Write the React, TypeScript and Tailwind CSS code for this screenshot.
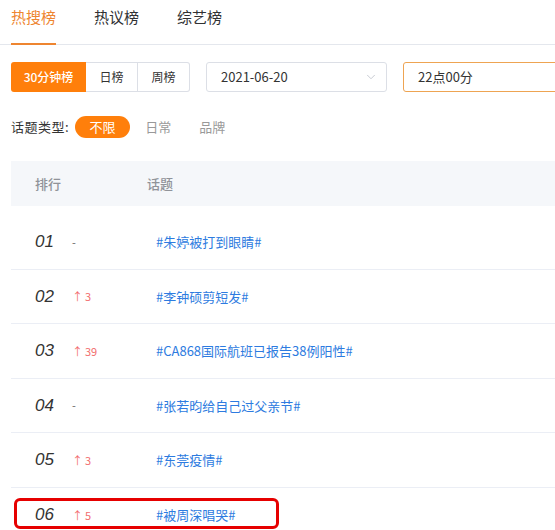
import { ChevronDown } from "lucide-react";

const rows = [
  { rank: "01", change: "", topic: "#朱婷被打到眼睛#" },
  { rank: "02", change: "3", topic: "#李钟硕剪短发#" },
  { rank: "03", change: "39", topic: "#CA868国际航班已报告38例阳性#" },
  { rank: "04", change: "", topic: "#张若昀给自己过父亲节#" },
  { rank: "05", change: "3", topic: "#东莞疫情#" },
  { rank: "06", change: "5", topic: "#被周深唱哭#" },
];

export default function App() {
  return (
    <div
      className="w-[555px] h-[530px] overflow-hidden bg-white text-[#333]"
      style={{ fontFamily: '"Noto Sans CJK SC", "Noto Sans", sans-serif' }}
    >
      {/* Tabs */}
      <div className="relative h-[45px] border-b border-[#e4e7ed] flex pl-[11px] gap-[38px]">
        <div className="relative pt-[6px] text-[15px] text-[#ee8530]">
          热搜榜
          <div className="absolute left-0 right-0 bottom-[-1px] h-[2px] bg-[#ee8530]" />
        </div>
        <div className="pt-[6px] text-[15px] text-[#303133]">热议榜</div>
        <div className="pt-[6px] text-[15px] text-[#303133]">综艺榜</div>
      </div>

      {/* Filters */}
      <div className="flex items-center mt-[17px] pl-[11px] h-[30px]">
        <div className="flex h-[30px] text-[12px] shrink-0">
          <div className="w-[75px] flex items-center justify-center bg-[#ff7f0b] text-white rounded-l-[3px] font-medium">
            30分钟榜
          </div>
          <div className="w-[52px] flex items-center justify-center border border-l-0 border-[#dcdfe6] text-[#333]">
            日榜
          </div>
          <div className="w-[52px] flex items-center justify-center border border-l-0 border-[#dcdfe6] text-[#333] rounded-r-[3px]">
            周榜
          </div>
        </div>
        <div className="ml-[16px] w-[181px] shrink-0 h-[30px] border border-[#dcdfe6] rounded-[3px] flex items-center justify-between pl-[14px] pr-[8px] text-[13px] text-[#333]">
          <span>2021-06-20</span>
          <ChevronDown size={14} strokeWidth={1.5} className="text-[#c0c4cc]" />
        </div>
        <div className="ml-[16px] w-[170px] shrink-0 h-[30px] border border-[#eea452] rounded-[3px] flex items-center pl-[14px] text-[13px] text-[#333]">
          22点00分
        </div>
      </div>

      {/* Topic type */}
      <div className="flex items-center mt-[23px] pl-[11px] h-[23px] text-[13px]">
        <span className="text-[#333] tracking-[0.5px]">话题类型:</span>
        <span className="ml-[6px] w-[55px] h-[22px] rounded-full bg-[#ff7f0b] text-white flex items-center justify-center">
          不限
        </span>
        <span className="ml-[15px] text-[#999]">日常</span>
        <span className="ml-[28px] text-[#999]">品牌</span>
      </div>

      {/* Table */}
      <div className="ml-[11px] mt-[23px]">
        <div className="h-[45px] bg-[#f5f7fa] flex items-center text-[13px] font-medium text-[#909399]">
          <span className="w-[136px] pl-[24px]">排行</span>
          <span>话题</span>
        </div>
        <div className="h-[9px]" />
        {rows.map((r, i) => (
          <div
            key={r.rank}
            className={
              "relative h-[54.5px] flex items-center " +
              (i < rows.length - 1 ? "border-b border-[#ebeef5]" : "")
            }
          >
            <span
              className="w-[37px] ml-[24px] text-[17px] italic text-[#333]"
              style={{ fontFamily: '"Liberation Sans", sans-serif' }}
            >
              {r.rank}
            </span>
            <span className="w-[84px] text-[11px] text-[#f26d6d]">
              {r.change ? (
                <>
                  <span className="mr-[2px]">↑</span>
                  {r.change}
                </>
              ) : (
                <span className="text-[#666]">-</span>
              )}
            </span>
            <span className="text-[13px] text-[#2d7be0]">{r.topic}</span>
            {i === rows.length - 1 && (
              <div className="absolute left-[3px] top-[10px] w-[265px] h-[31px] border-[3px] border-[#e60000] rounded-[6px]" />
            )}
          </div>
        ))}
      </div>
    </div>
  );
}
